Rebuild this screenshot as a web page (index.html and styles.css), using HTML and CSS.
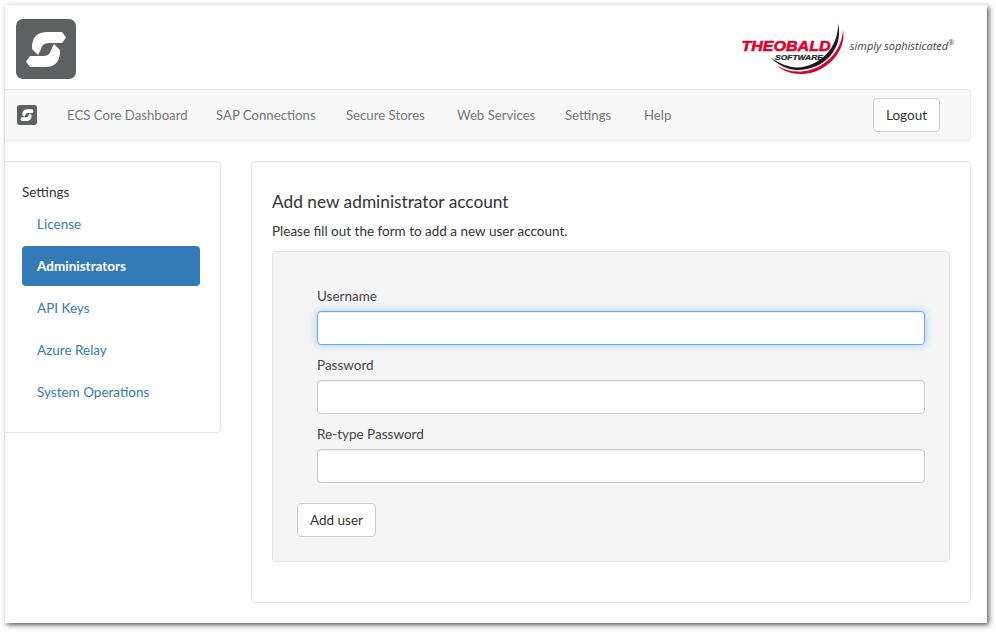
FILE: index.html
```html
<!DOCTYPE html>
<html lang="en">
<head>
<meta charset="utf-8">
<title>Add new administrator account</title>
<link rel="stylesheet" href="styles.css">
</head>
<body>
<div class="window">
  <header class="header">
    <div class="logo-tile">
      <svg width="60" height="60" viewBox="0 0 60 60"><rect width="60" height="60" rx="7" fill="#5f6062"/><path class="s-mark" d="M46 13 50 18.5 46 24H33Q26 24 25 30L22 36 16 30V27Q17 13 31 13Z"/><path class="s-mark" d="M14 48 10 42.5 14 37H27Q34 37 35 31L38 25 44 31V34Q43 48 29 48Z"/></svg>
    </div>
    <div class="brand">
      <svg class="brand-mark" width="108" height="58" viewBox="0 0 108 58">
        <path class="arc-red" d="M104 10C108 30 88 54 62 54 52 54 44 51 37 45 45 50 54 52 62 51.5 84 50 103 32 104 10Z"/>
        <path class="arc-black" d="M99 3C105 28 86 50 58 50 50 50 40 46 32 38 40 43 50 47.5 58 47.5 80 47 100 28 99 3Z"/>
        <text class="brand-name" x="2.5" y="30.5" textLength="89" lengthAdjust="spacingAndGlyphs">THEOBALD</text>
        <text class="brand-sub" x="36" y="40" textLength="48" lengthAdjust="spacingAndGlyphs">SOFTWARE</text>
      </svg>
      <span class="tagline">simply sophisticated<sup>®</sup></span>
    </div>
  </header>
  <nav class="navbar">
    <svg class="nav-logo" width="20" height="20" viewBox="0 0 60 60"><rect width="60" height="60" rx="8" fill="#5f6062"/><path class="s-mark" d="M46 13 50 18.5 46 24H33Q26 24 25 30L22 36 16 30V27Q17 13 31 13Z"/><path class="s-mark" d="M14 48 10 42.5 14 37H27Q34 37 35 31L38 25 44 31V34Q43 48 29 48Z"/></svg>
    <ul class="nav-links">
      <li>ECS Core Dashboard</li>
      <li>SAP Connections</li>
      <li>Secure Stores</li>
      <li>Web Services</li>
      <li>Settings</li>
      <li>Help</li>
    </ul>
    <button class="btn logout">Logout</button>
  </nav>
  <div class="content">
    <aside class="panel sidebar">
      <div class="side-title">Settings</div>
      <ul class="side-list">
        <li class="side-item">License</li>
        <li class="side-item active">Administrators</li>
        <li class="side-item">API Keys</li>
        <li class="side-item">Azure Relay</li>
        <li class="side-item">System Operations</li>
      </ul>
    </aside>
    <main class="panel main">
      <h1 class="title">Add new administrator account</h1>
      <p class="lead">Please fill out the form to add a new user account.</p>
      <form class="well">
        <div class="field">
          <label class="label">Username</label>
          <input class="input focused" type="text">
        </div>
        <div class="field">
          <label class="label">Password</label>
          <input class="input" type="password">
        </div>
        <div class="field">
          <label class="label">Re-type Password</label>
          <input class="input" type="password">
        </div>
        <button class="btn add" type="button">Add user</button>
      </form>
    </main>
  </div>
</div>
</body>
</html>
```
FILE: styles.css
```css
* { box-sizing: border-box; }
html, body { margin: 0; padding: 0; height: 100%; background: #fff; }
body {
  padding: 5px 9px 9px 5px;
  font-family: Lato, "Open Sans", "Liberation Sans", sans-serif;
  font-size: 13.5px;
  line-height: 20px;
  color: #333;
}
.window {
  width: 982px;
  height: 618px;
  background: #fff;
  overflow: hidden;
  box-shadow: 2px 2px 5px rgba(0,0,0,.65);
  padding-right: 16px;
}
.header {
  height: 84px;
  display: flex;
  align-items: flex-start;
  justify-content: space-between;
  padding: 14px 17px 0 11px;
}
.logo-tile svg { display: block; }
.s-mark { fill: #fff; }
.brand { display: flex; align-items: center; gap: 3px; margin-top: 1px; }
.brand-mark { display: block; }
.arc-red { fill: #d9002c; }
.arc-black { fill: #1a1a1a; }
.brand-name { font: italic 700 14.5px "Liberation Sans", sans-serif; fill: #e2002d; stroke: #e2002d; stroke-width: .6px; }
.brand-sub { font: italic 700 6.8px "Liberation Sans", sans-serif; fill: #222; stroke: #222; stroke-width: .2px; }
.tagline { font-family: "Open Sans", sans-serif; font-style: italic; font-size: 11px; color: #444; margin-top: -6px; white-space: nowrap; }
.tagline sup { font-size: 7px; line-height: 0; }
.navbar {
  height: 52px;
  margin-left: -5px;
  display: flex;
  align-items: center;
  background: #f8f8f8;
  border: 1px solid #e7e7e7;
  border-radius: 4px;
  padding: 0 30px 0 16px;
}
.nav-logo { display: block; flex: none; }
.nav-links {
  list-style: none;
  margin: 0 0 0 30px;
  padding: 0;
  display: grid;
  grid-template-columns: 149px 130px 111px 108px 79px auto;
  flex: 1;
  color: #777;
  font-size: 13.2px;
}
.btn {
  font: inherit;
  color: #333;
  background: #fff;
  border: 1px solid #ccc;
  border-radius: 4px;
  height: 34px;
  padding: 0 12px;
}
.content {
  display: flex;
  align-items: flex-start;
  gap: 30px;
  margin-top: 20px;
}
.panel {
  background: #fff;
  border: 1px solid #e3e3e3;
  border-radius: 4px;
}
.sidebar {
  width: 221px;
  margin-left: -5px;
  padding: 20px 20px 20px 21px;
  flex: none;
}
.side-title { line-height: 20px; color: #333; }
.side-list { list-style: none; margin: 2px 0 0; padding: 0; }
.side-item {
  height: 40px;
  line-height: 40px;
  margin-bottom: 2px;
  padding: 0 15px;
  border-radius: 4px;
  color: #337ab7;
}
.side-item:last-child { margin-bottom: 0; }
.active { background: #337ab7; color: #fff; font-weight: 700; }
.main { flex: 1; height: 442px; padding: 28px 20px 0; }
.title { margin: 0; font-size: 17.3px; font-weight: 400; line-height: 24px; color: #333; }
.lead { margin: 7px 0 0; line-height: 20px; }
.well {
  margin-top: 10px;
  height: 311px;
  background: #f5f5f5;
  border: 1px solid #e3e3e3;
  border-radius: 4px;
  padding: 34px 24px 0;
}
.field { margin: 0 0 10px 20px; }
.label { display: block; line-height: 20px; margin-bottom: 5px; color: #444; }
.input {
  display: block;
  width: 100%;
  height: 34px;
  background: #fff;
  border: 1px solid #ccc;
  border-radius: 4px;
  outline: none;
  box-shadow: inset 0 1px 1px rgba(0,0,0,.075);
}
.focused { border-color: #66afe9; box-shadow: inset 0 1px 1px rgba(0,0,0,.075), 0 0 8px rgba(102,175,233,.6); }
.add { margin-top: 20px; display: block; }
```
